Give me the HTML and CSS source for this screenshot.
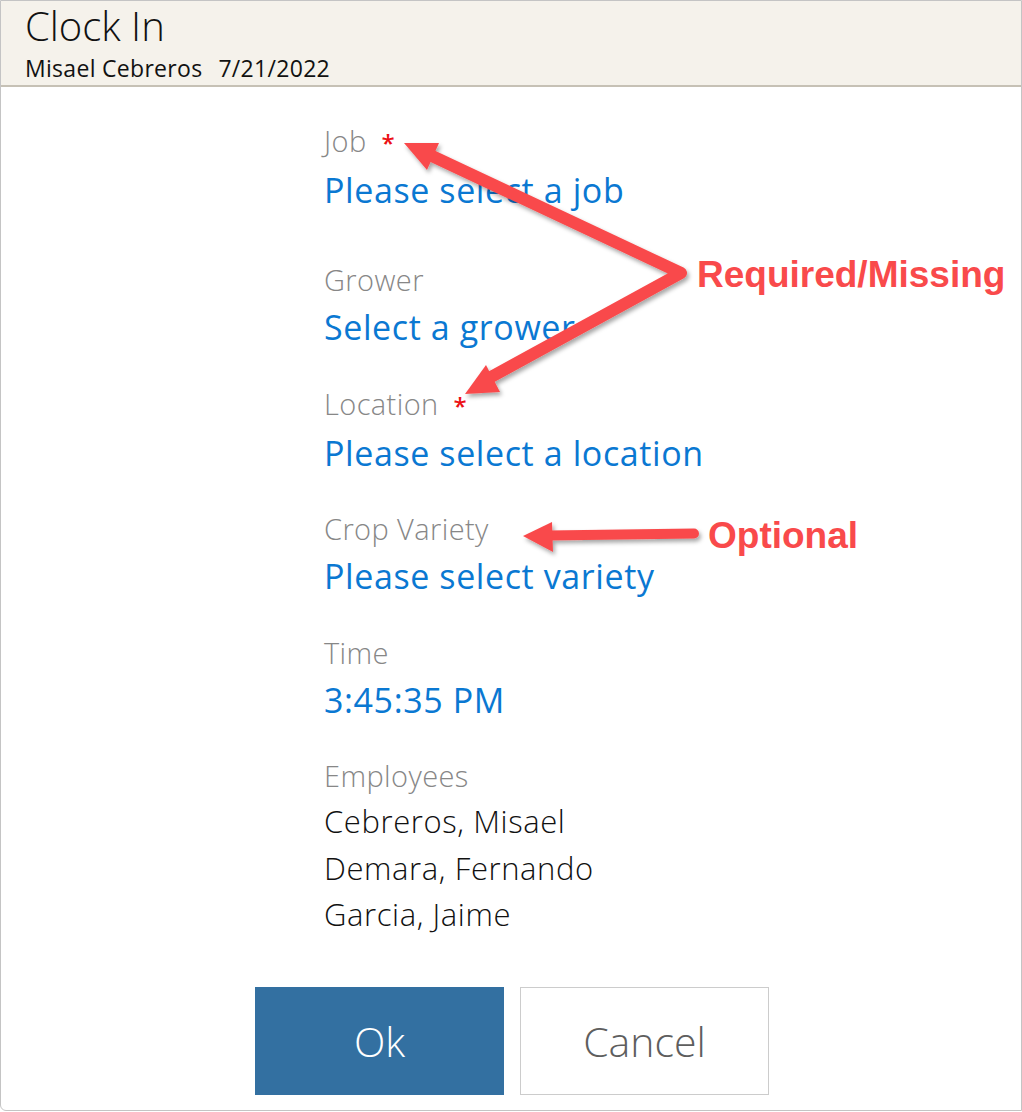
FILE: index.html
```html
<!DOCTYPE html>
<html lang="en">
<head>
<meta charset="utf-8">
<title>Clock In</title>
<link rel="stylesheet" href="styles.css">
</head>
<body>
<div class="dialog">
  <header class="hdr">
    <h1 class="title">Clock In</h1>
    <div class="sub"><span class="who">Misael Cebreros</span><span class="date">7/21/2022</span></div>
  </header>
  <main class="form">
    <div class="field field-first">
      <div class="label">Job <span class="req">*</span></div>
      <div class="value">Please select a job</div>
    </div>
    <div class="field">
      <div class="label">Grower</div>
      <div class="value">Select a grower</div>
    </div>
    <div class="field">
      <div class="label">Location <span class="req">*</span></div>
      <div class="value">Please select a location</div>
    </div>
    <div class="field">
      <div class="label">Crop Variety</div>
      <div class="value">Please select variety</div>
    </div>
    <div class="field">
      <div class="label">Time</div>
      <div class="value">3:45:35 PM</div>
    </div>
    <div class="field field-last">
      <div class="label">Employees</div>
      <ul class="emps">
        <li>Cebreros, Misael</li>
        <li>Demara, Fernando</li>
        <li>Garcia, Jaime</li>
      </ul>
    </div>
  </main>
  <div class="actions">
    <button class="btn btn-ok" type="button">Ok</button>
    <button class="btn btn-cancel" type="button">Cancel</button>
  </div>

  <svg class="annot" width="1022" height="1112" viewBox="0 0 1022 1112" aria-hidden="true">
    <defs>
      <filter id="sh" x="-20%" y="-20%" width="140%" height="140%">
        <feDropShadow dx="2" dy="3" stdDeviation="2" flood-color="#000" flood-opacity="0.35"/>
      </filter>
    </defs>
    <g filter="url(#sh)" fill="#f94a4b" stroke="#f94a4b">
      <polyline points="432,156 681,273 491,377" fill="none" stroke-width="12" stroke-linecap="round" stroke-linejoin="round"/>
      <polygon points="404,143 439,143 427,170" stroke="none"/>
      <polygon points="465,394 500,392 486,365" stroke="none"/>
      <line x1="548" y1="535.5" x2="694" y2="533.5" stroke-width="10" stroke-linecap="round"/>
      <polygon points="523,536 552,522 553,552" stroke="none"/>
    </g>
  </svg>
  <div class="note note-req">Required/Missing</div>
  <div class="note note-opt">Optional</div>
</div>
</body>
</html>
```

FILE: styles.css
```css
* { box-sizing: border-box; }
html, body { margin: 0; padding: 0; background: #fff; }
body { font-family: "Open Sans", "Noto Sans", sans-serif; }

.dialog {
  position: relative;
  width: 1022px;
  height: 1111px;
  border: 1px solid #c4c4c4;
  border-bottom-left-radius: 6px;
  background: #fff;
  overflow: hidden;
}

.hdr {
  height: 86px;
  background: #f5f2eb;
  border-bottom: 2px solid #c6c1b5;
  padding: 0 0 0 24px;
}
.title {
  margin: 0;
  font-size: 40px;
  line-height: 50px;
  font-weight: 300;
  color: #111;
}
.sub {
  margin-top: 3px;
  font-size: 23px;
  line-height: 28px;
  font-weight: 400;
  letter-spacing: 0.3px;
  color: #111;
  display: flex;
  gap: 16px;
}

.form {
  padding: 36px 0 0 323px;
}
.field { margin-bottom: 36.5px; }
.field-first { margin-bottom: 50px; }
.field-last { margin-bottom: 0; }
.label {
  font-size: 29px;
  line-height: 36px;
  font-weight: 300;
  letter-spacing: 0.4px;
  color: #878787;
}
.req {
  color: #ec1015;
  font-weight: 600;
  font-size: 24px;
  margin-left: 7px;
}
.value {
  margin-top: 7px;
  font-size: 34px;
  line-height: 44px;
  font-weight: 400;
  letter-spacing: 0.6px;
  color: #0a78d2;
}
.emps {
  list-style: none;
  margin: 4px 0 0;
  padding: 0;
  font-size: 31px;
  line-height: 46.5px;
  font-weight: 300;
  letter-spacing: 0.6px;
  color: #111;
}

.actions {
  display: flex;
  justify-content: center;
  gap: 16px;
  margin-top: 49px;
  padding-left: 2px;
}
.btn {
  width: 249px;
  height: 108px;
  font-family: "Open Sans", "Noto Sans", sans-serif;
  font-size: 41px;
  font-weight: 300;
  border: 1px solid transparent;
  cursor: pointer;
  padding: 0;
}
.btn-ok { background: #3370a1; color: #fff; border-color: #3370a1; }
.btn-cancel { background: #fff; color: #5e5e5e; border-color: #cccccc; }

.annot {
  position: absolute;
  left: -1px;
  top: -1px;
  pointer-events: none;
}
.note {
  position: absolute;
  font-family: "Liberation Sans", Arial, sans-serif;
  font-weight: 700;
  font-size: 37px;
  line-height: 37px;
  color: #f94a4b;
  white-space: nowrap;
}
.note-req { left: 696px; top: 255px; }
.note-opt { left: 707px; top: 516px; }
```
